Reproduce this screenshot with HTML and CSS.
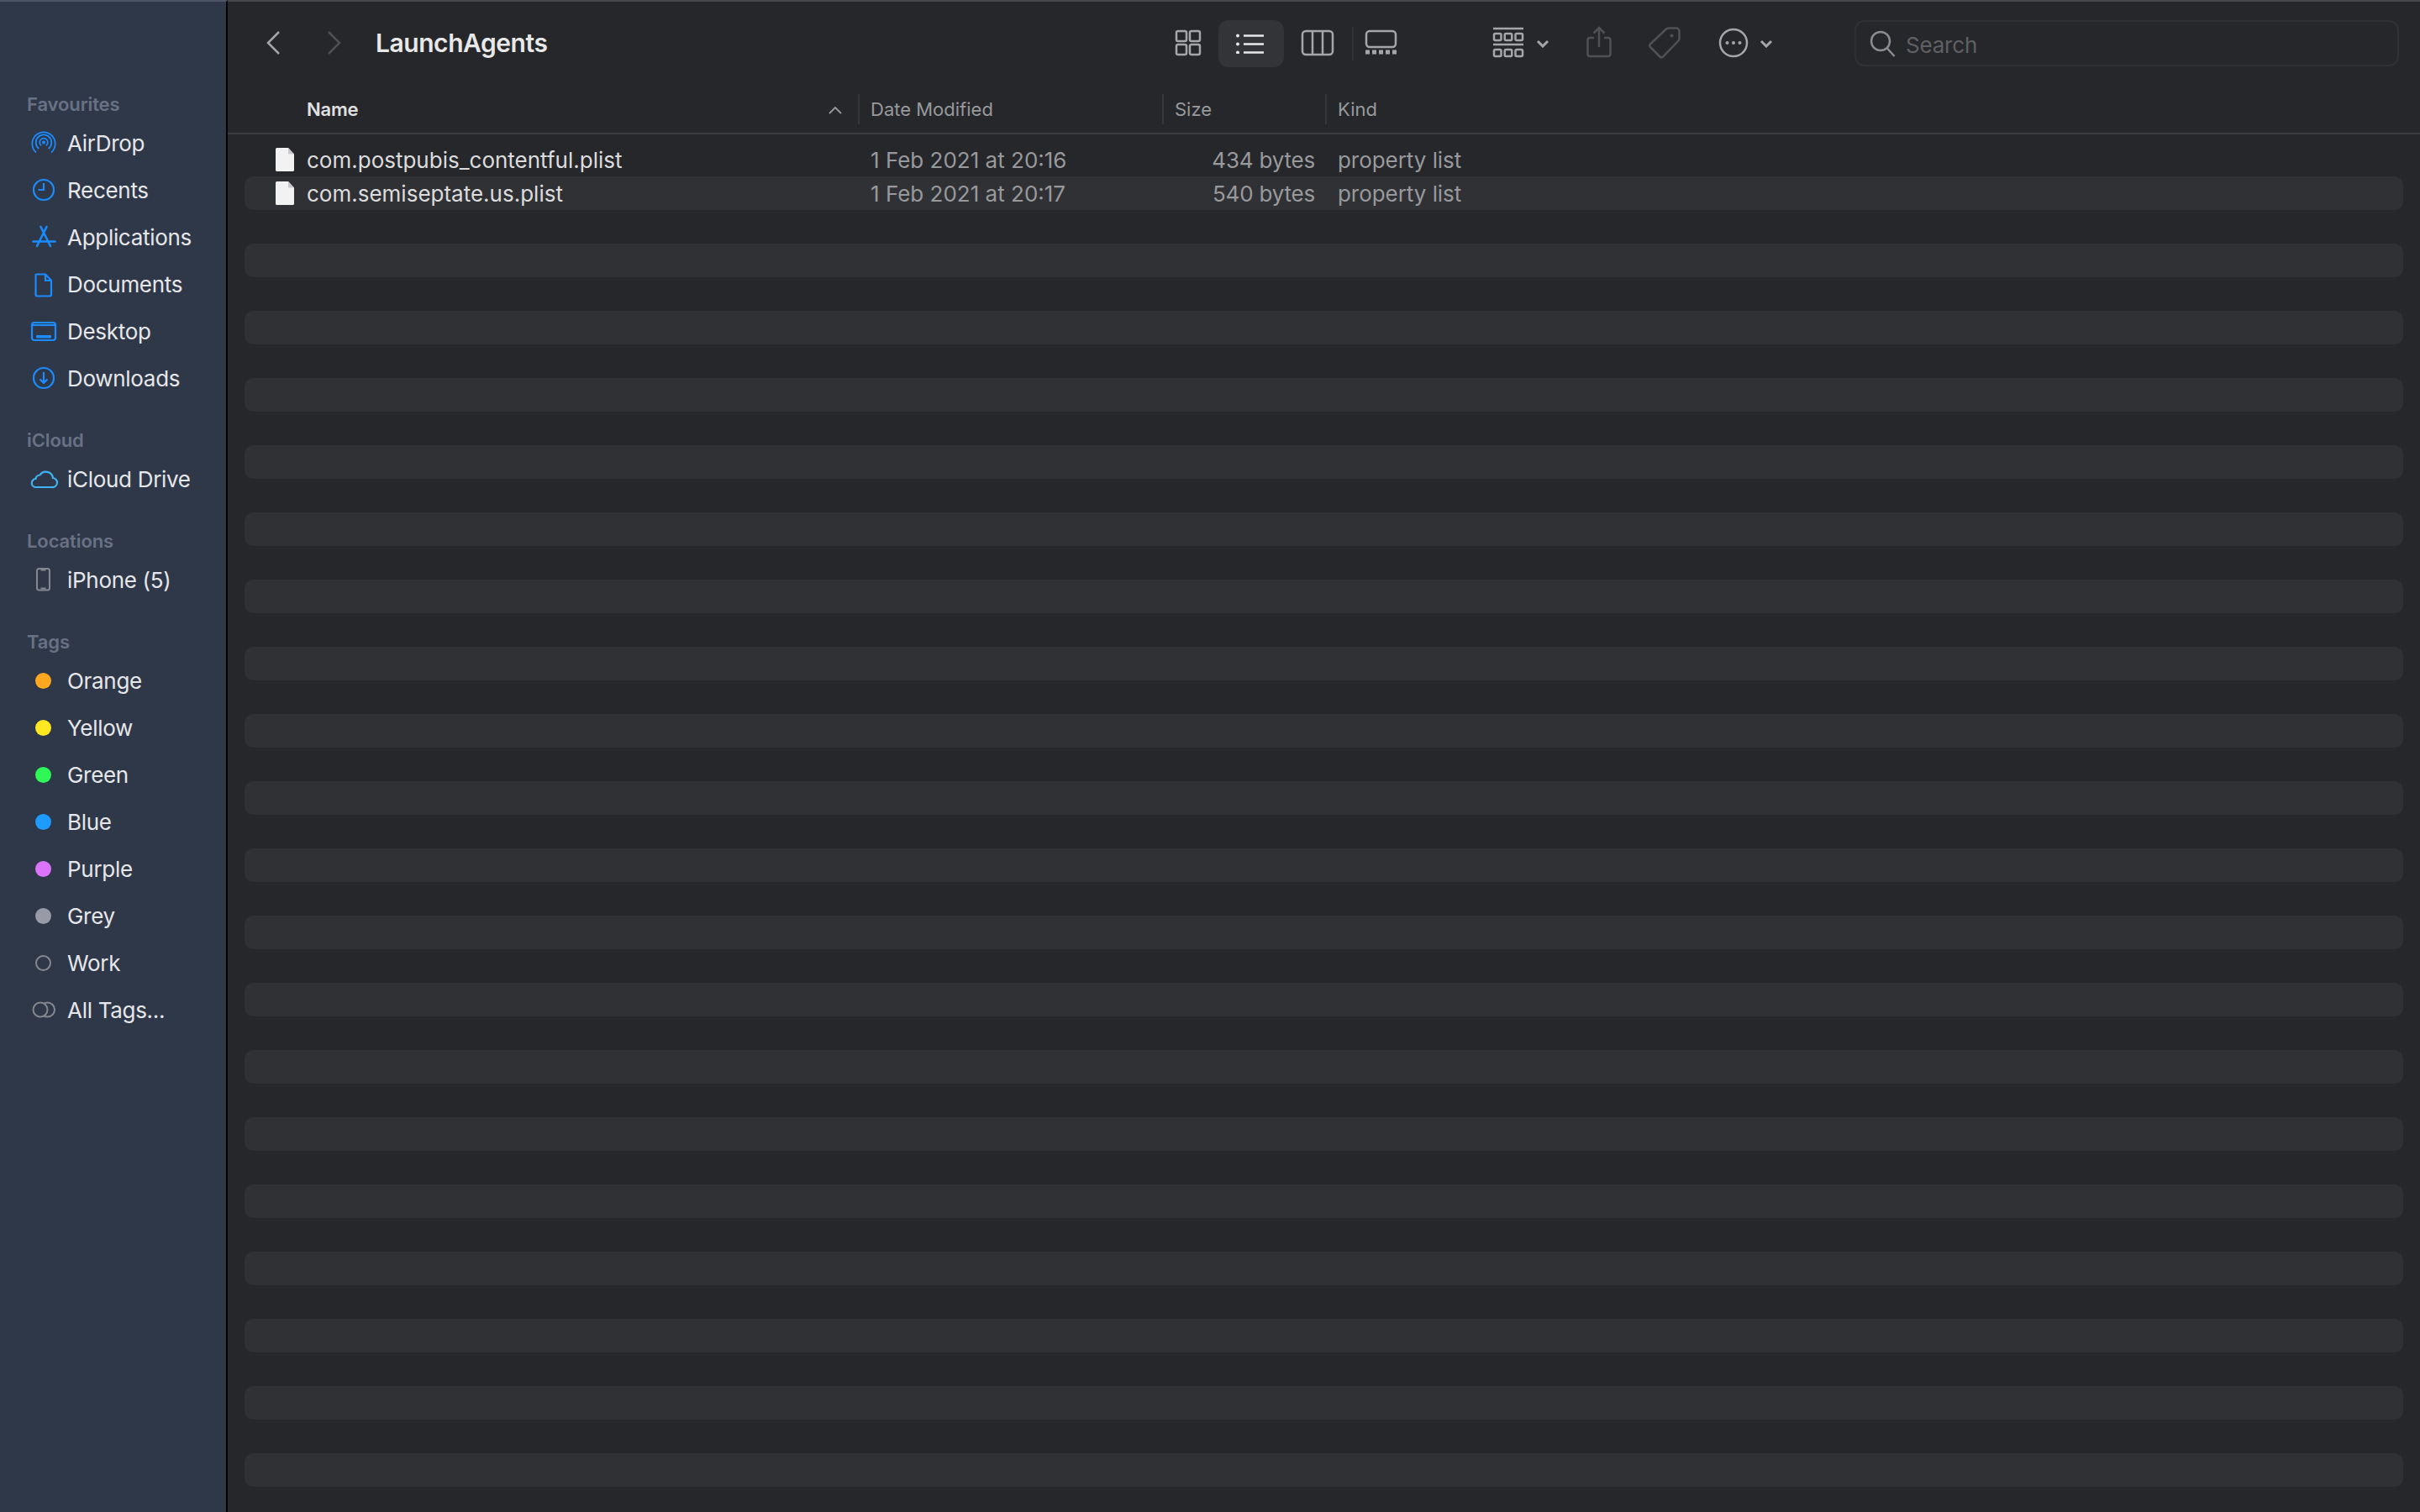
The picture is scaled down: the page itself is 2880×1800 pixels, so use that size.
FILE: index.html
```html
<!DOCTYPE html>
<html lang="en">
<head>
	<meta charset="UTF-8">
	<title>LaunchAgents</title>
	<link rel="stylesheet" href="styles.css">
</head>
<body>
<div class="window">
	<div class="sidebar">
		<div class="side_group">
			<div class="side_title">Favourites</div>
			<div class="side_item">
				<svg class="side_icon airdrop" viewBox="0 0 38 38"><circle class="solid" cx="19" cy="18.500" r="2"/><path d="M16.200 22.400A4.800 4.800 0 1 1 21.800 22.400M13.200 26A9.300 9.300 0 1 1 24.800 26M10 30.500A13.700 13.700 0 1 1 28 30.500"/></svg>
				AirDrop
			</div>
			<div class="side_item">
				<svg class="side_icon" viewBox="0 0 38 38"><circle cx="19" cy="19" r="12"/><path d="M19 11V19H12.500"/></svg>
				Recents
			</div>
			<div class="side_item">
				<svg class="side_icon" viewBox="0 0 38 38"><path class="thick" d="M15.500 7L27 30M22.500 7L11 30M6.500 24.500H32.500"/></svg>
				Applications
			</div>
			<div class="side_item">
				<svg class="side_icon" viewBox="0 0 38 38"><path d="M10.500 7.500H21L28 15V31.500A2 2 0 0 1 26 33.500H11.500A2 2 0 0 1 9.500 31.500V8.500A1 1 0 0 1 10.500 7.500ZM21 7.500V15H28"/></svg>
				Documents
			</div>
			<div class="side_item">
				<svg class="side_icon" viewBox="0 0 38 38"><rect x="5" y="9" width="28" height="21" rx="3"/><path d="M5 12H33"/><rect class="solid" x="10" y="24" width="18" height="3.500" rx="1"/></svg>
				Desktop
			</div>
			<div class="side_item">
				<svg class="side_icon" viewBox="0 0 38 38"><circle cx="19" cy="19" r="12"/><path d="M19 12V25M14.500 20.500L19 25L23.500 20.500"/></svg>
				Downloads
			</div>
		</div>
		<div class="side_group">
			<div class="side_title">iCloud</div>
			<div class="side_item">
				<svg class="side_icon cloud" viewBox="0 0 38 38"><path d="M10 29H29A5.500 5.500 0 0 0 30 18A8.500 8.500 0 0 0 14.500 14.500A5 5 0 0 0 9.500 19A5 5 0 0 0 10 29Z"/></svg>
				iCloud Drive
			</div>
		</div>
		<div class="side_group">
			<div class="side_title">Locations</div>
			<div class="side_item">
				<svg class="side_icon phone" viewBox="0 0 38 38"><rect x="11" y="6" width="15" height="25.500" rx="2.500"/><path d="M15.500 7.500H21.500M15.500 29.500H21.500"/></svg>
				iPhone (5)
			</div>
		</div>
		<div class="side_group">
			<div class="side_title">Tags</div>
			<div class="side_item"><span class="dot orange"></span>Orange</div>
			<div class="side_item"><span class="dot yellow"></span>Yellow</div>
			<div class="side_item"><span class="dot green"></span>Green</div>
			<div class="side_item"><span class="dot blue"></span>Blue</div>
			<div class="side_item"><span class="dot purple"></span>Purple</div>
			<div class="side_item"><span class="dot grey"></span>Grey</div>
			<div class="side_item"><span class="dot ring"></span>Work</div>
			<div class="side_item">
				<svg class="side_icon phone" viewBox="0 0 38 38"><circle cx="23.500" cy="19" r="8.500"/><circle cx="15" cy="19" r="8.500" fill="#2f3849"/></svg>
				All Tags...
			</div>
		</div>
	</div>
	<div class="main">
		<div class="toolbar">
			<svg class="tool back" viewBox="0 0 18 30"><path d="M16 2L3 15L16 28"/></svg>
			<svg class="tool forward" viewBox="0 0 18 30"><path d="M2 2L15 15L2 28"/></svg>
			<div class="title">LaunchAgents</div>
			<svg class="tool view_icons" viewBox="0 0 32 32"><rect x="2" y="2" width="12" height="12" rx="2"/><rect x="18" y="2" width="12" height="12" rx="2"/><rect x="2" y="18" width="12" height="12" rx="2"/><rect x="18" y="18" width="12" height="12" rx="2"/></svg>
			<div class="view_on">
				<svg class="tool list_icon" viewBox="0 0 34 24"><circle cx="3" cy="2.500" r="2" fill="#e8e8e9" stroke="none"/><circle cx="3" cy="12.500" r="2" fill="#e8e8e9" stroke="none"/><circle cx="3" cy="22.500" r="2" fill="#e8e8e9" stroke="none"/><path d="M10 2.500H34M10 12.500H34M10 22.500H34"/></svg>
			</div>
			<svg class="tool view_cols" viewBox="0 0 40 32"><rect x="2" y="2" width="36" height="28" rx="4"/><path d="M14 2V30M26 2V30"/></svg>
			<div class="divider"></div>
			<svg class="tool view_gallery" viewBox="0 0 40 32"><rect x="2" y="2" width="35" height="19" rx="4"/><path class="squares" d="M1 27H38"/></svg>
			<svg class="tool group" viewBox="0 0 38 38"><path d="M1 2H37M1 21H37"/><rect x="2" y="8" width="8.500" height="8" rx="1.500"/><rect x="14.750" y="8" width="8.500" height="8" rx="1.500"/><rect x="27.500" y="8" width="8.500" height="8" rx="1.500"/><rect x="2" y="27" width="8.500" height="8" rx="1.500"/><rect x="14.750" y="27" width="8.500" height="8" rx="1.500"/><rect x="27.500" y="27" width="8.500" height="8" rx="1.500"/></svg>
			<svg class="tool chev chev_group" viewBox="0 0 16 10"><path d="M2 2L8 8L14 2"/></svg>
			<svg class="tool share" viewBox="0 0 30 38"><path d="M9 14H4A2.500 2.500 0 0 0 1.500 16.500V33.500A2.500 2.500 0 0 0 4 36H26A2.500 2.500 0 0 0 28.500 33.500V16.500A2.500 2.500 0 0 0 26 14H21M15 25V2M8.500 8.500L15 2L21.500 8.500"/></svg>
			<svg class="tool tag" viewBox="0 0 40 40"><path d="M25 2.500H34A3.500 3.500 0 0 1 37.500 6V15A4 4 0 0 1 36.500 17.500L18 36.500A2.500 2.500 0 0 1 14.500 36.500L3 25A2.500 2.500 0 0 1 3 21.500L22 3.500A4 4 0 0 1 25 2.500Z"/><circle class="tag_hole" cx="28.500" cy="11.500" r="2"/></svg>
			<svg class="tool more" viewBox="0 0 36 36"><circle cx="18" cy="18" r="16"/><circle class="more_dot" cx="10.500" cy="18" r="2"/><circle class="more_dot" cx="18" cy="18" r="2"/><circle class="more_dot" cx="25.500" cy="18" r="2"/></svg>
			<svg class="tool chev chev_more" viewBox="0 0 16 10"><path d="M2 2L8 8L14 2"/></svg>
			<div class="search_box">
				<svg class="search_icon" viewBox="0 0 32 32"><circle cx="13" cy="13" r="11"/><path d="M20.500 21L29.500 31"/></svg>
				<span class="search_text">Search</span>
			</div>
		</div>
		<div class="col_head">
			<div class="head_cell head_name">Name
				<svg class="sort_icon" viewBox="0 0 16 9"><path d="M1 8L8 1L15 8"/></svg>
			</div>
			<div class="head_cell">Date Modified</div>
			<div class="head_cell">Size</div>
			<div class="head_cell">Kind</div>
		</div>
		<div class="rows">
			<div class="row">
				<div class="cell_name"><svg class="file_icon" viewBox="0 0 22 28"><path d="M1.500 0H15L22 7.500V26.500A1.500 1.500 0 0 1 20.500 28H1.500A1.500 1.500 0 0 1 0 26.500V1.500A1.500 1.500 0 0 1 1.500 0Z"/><path class="fold" d="M15 0L22 7.500H15Z"/></svg>com.postpubis_contentful.plist</div>
				<div class="cell_date">1 Feb 2021 at 20:16</div>
				<div class="cell_size">434 bytes</div>
				<div class="cell_kind">property list</div>
			</div>
			<div class="row">
				<div class="cell_name"><svg class="file_icon" viewBox="0 0 22 28"><path d="M1.500 0H15L22 7.500V26.500A1.500 1.500 0 0 1 20.500 28H1.500A1.500 1.500 0 0 1 0 26.500V1.500A1.500 1.500 0 0 1 1.500 0Z"/><path class="fold" d="M15 0L22 7.500H15Z"/></svg>com.semiseptate.us.plist</div>
				<div class="cell_date">1 Feb 2021 at 20:17</div>
				<div class="cell_size">540 bytes</div>
				<div class="cell_kind">property list</div>
			</div>
			<div class="row"></div><div class="row"></div><div class="row"></div><div class="row"></div>
			<div class="row"></div><div class="row"></div><div class="row"></div><div class="row"></div>
			<div class="row"></div><div class="row"></div><div class="row"></div><div class="row"></div>
			<div class="row"></div><div class="row"></div><div class="row"></div><div class="row"></div>
			<div class="row"></div><div class="row"></div><div class="row"></div><div class="row"></div>
			<div class="row"></div><div class="row"></div><div class="row"></div><div class="row"></div>
			<div class="row"></div><div class="row"></div><div class="row"></div><div class="row"></div>
			<div class="row"></div><div class="row"></div><div class="row"></div><div class="row"></div>
			<div class="row"></div><div class="row"></div><div class="row"></div><div class="row"></div>
			<div class="row"></div><div class="row"></div><div class="row"></div><div class="row"></div>
		</div>
	</div>
</div>
</body>
</html>
```

FILE: styles.css
```css
html,body{
	margin:0;
	height:100%;
	overflow:hidden;
	background-color:#26272b;
}
body{
	font-family:"Inter","Noto Sans",sans-serif;
}
.window{
	display:flex;
	height:1800px;
}

/* sidebar */
.sidebar{
	width:271px;
	flex:none;
	box-sizing:border-box;
	padding-top:104px;
	background-color:#2f3849;
	border-top:2px solid #4c5465;
	border-right:2px solid #000;
	color:#e6e7ea;
}
.side_group{
	margin-bottom:28px;
}
.side_title{
	height:36px;
	line-height:36px;
	padding-left:32px;
	font-size:22px;
	font-weight:600;
	letter-spacing:-0.1px;
	color:#697285;
}
.side_item{
	display:flex;
	align-items:center;
	height:56px;
	padding-left:33px;
	font-size:26px;
	letter-spacing:-0.3px;
}
.side_icon{
	width:38px;
	height:38px;
	margin-right:9px;
	flex:none;
	fill:none;
	stroke:#1a8cff;
	stroke-width:2.2;
}
.side_icon .thick{
	stroke-width:2.600;
	stroke-linecap:round;
}
.side_icon .solid{
	fill:#1a8cff;
	stroke:none;
}
.side_icon.airdrop{
	stroke-width:1.700;
}
.side_icon.cloud{
	stroke:#3fb4f5;
}
.side_icon.phone{
	stroke:#85888f;
	stroke-width:2;
}
.dot{
	width:19px;
	height:19px;
	border-radius:50%;
	box-sizing:border-box;
	margin:0 19px 0 9px;
	flex:none;
}
.orange{background-color:#ffa71f;}
.yellow{background-color:#ffe81f;}
.green{background-color:#2ef756;}
.blue{background-color:#1f9bff;}
.purple{background-color:#dc74fb;}
.grey{background-color:#989ba6;}
.ring{border:2px solid #85888f;}

/* toolbar */
.main{
	flex:1;
	min-width:0;
}
.toolbar{
	position:relative;
	height:100px;
	box-sizing:border-box;
	border-top:2px solid #48494d;
}
.tool{
	position:absolute;
	fill:none;
	stroke:#a5a6a9;
	stroke-width:2.5;
}
.back{left:45px;top:34px;width:18px;height:30px;}
.forward{left:118px;top:34px;width:18px;height:30px;stroke:#505155;}
.title{
	position:absolute;
	left:176px;
	top:30px;
	line-height:38px;
	font-size:30px;
	font-weight:600;
	letter-spacing:-0.45px;
	color:#e8e8e9;
}
.view_icons{left:1127px;top:33px;width:32px;height:32px;}
.view_on{
	position:absolute;
	left:1179px;
	top:22px;
	width:78px;
	height:56px;
	border-radius:12px;
	background-color:#333438;
}
.list_icon{left:20px;top:16px;width:34px;height:24px;stroke:#e8e8e9;}
.view_cols{left:1277px;top:33px;width:40px;height:32px;}
.divider{
	position:absolute;
	left:1338px;
	top:30px;
	width:2px;
	height:40px;
	background-color:#313236;
}
.view_gallery{left:1353px;top:33px;width:40px;height:32px;}
.view_gallery .squares{stroke-width:5;stroke-dasharray:5 3;}
.group{left:1505px;top:30px;width:38px;height:38px;}
.chev{width:16px;height:10px;stroke-width:3;}
.chev_group{left:1557px;top:45px;}
.share{left:1617px;top:29px;width:30px;height:38px;stroke:#505155;}
.tag{left:1690px;top:29px;width:40px;height:40px;stroke:#505155;}
.tag_hole{fill:#505155;stroke:none;}
.more{left:1774px;top:31px;width:36px;height:36px;}
.more_dot{fill:#a5a6a9;stroke:none;}
.chev_more{left:1823px;top:45px;}
.search_box{
	position:absolute;
	left:1936px;
	top:22px;
	width:648px;
	height:55px;
	box-sizing:border-box;
	display:flex;
	align-items:center;
	padding-left:16px;
	border:2px solid #303135;
	border-radius:12px;
	font-size:26px;
	letter-spacing:-0.2px;
	color:#5f6064;
}
.search_icon{
	width:32px;
	height:32px;
	margin-right:11px;
	fill:none;
	stroke:#8b8c8f;
	stroke-width:2.5;
}
.search_text{
	padding-top:4px;
}

/* list */
.col_head{
	display:grid;
	grid-template-columns:730px 362px 194px 1fr;
	height:60px;
	box-sizing:border-box;
	padding:12px 20px 20px;
	border-bottom:2px solid #3c3d41;
	font-size:22px;
	color:#98999c;
	margin-bottom:10px;
}
.head_cell{
	border-left:2px solid #36373b;
	padding-left:13px;
	line-height:36px;
}
.head_name{
	position:relative;
	border-left:0;
	padding-left:74px;
	font-weight:600;
	letter-spacing:-0.2px;
	color:#e0e0e1;
}
.sort_icon{
	position:absolute;
	left:695px;
	top:15px;
	width:16px;
	height:9px;
	fill:none;
	stroke:#98999c;
	stroke-width:1.800;
}
.rows{
	padding:0 20px;
}
.row{
	display:grid;
	grid-template-columns:730px 362px 194px 1fr;
	height:40px;
	line-height:42px;
	border-radius:10px;
	font-size:26px;
	color:#98999c;
}
.row:nth-child(even){
	background-color:#303135;
}
.cell_name{
	display:flex;
	align-items:flex-start;
	padding-left:37px;
	color:#dcdcdd;
}
.file_icon{
	width:22px;
	height:28px;
	margin:6px 15px 0 0;
	fill:#f2f2f2;
}
.file_icon .fold{
	fill:#c9c9c9;
}
.cell_date{
	padding-left:15px;
}
.cell_size{
	padding-right:12px;
	text-align:right;
	letter-spacing:-0.2px;
}
.cell_kind{
	padding-left:15px;
	letter-spacing:-0.05px;
}
```
